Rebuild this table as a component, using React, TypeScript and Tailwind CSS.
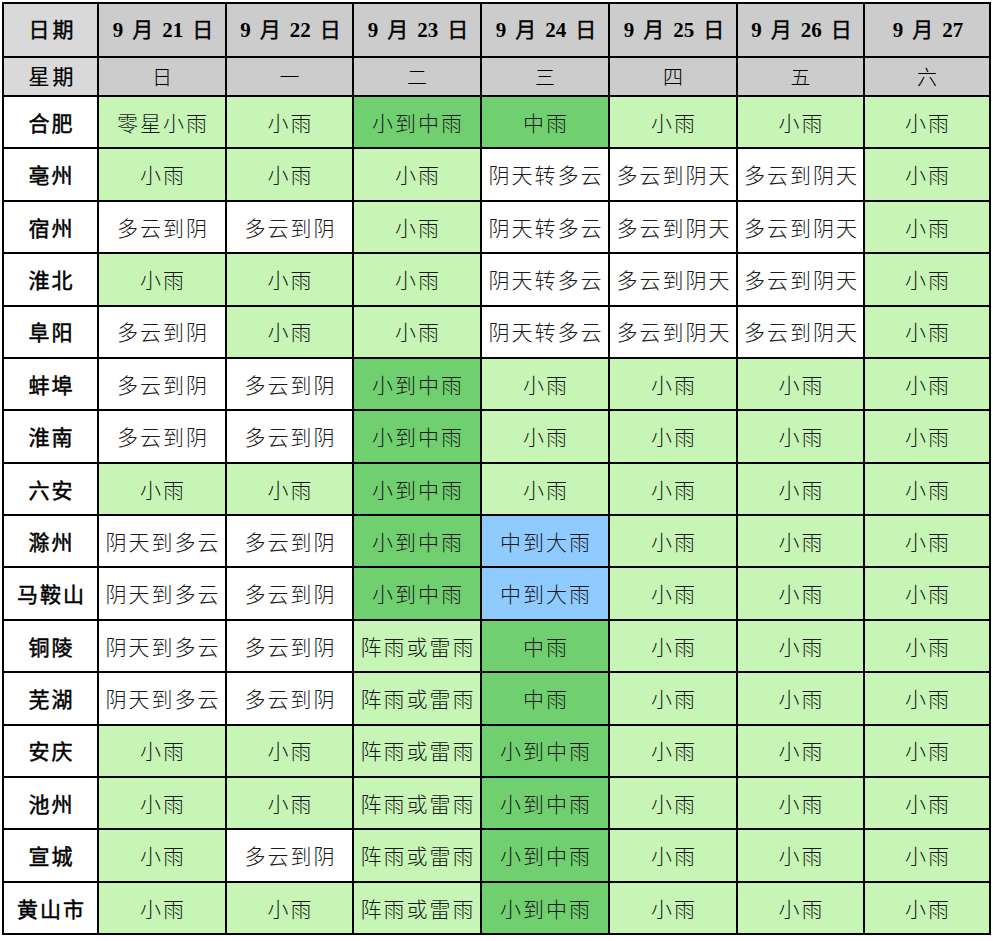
import React from "react";

type C = "L" | "M" | "B" | "W";

const bg: Record<C, string> = {
  L: "bg-[#c6f5b6]",
  M: "bg-[#70d070]",
  B: "bg-[#8fcbff]",
  W: "bg-white",
};

const dates: [string, string][] = [
  ["21", "日"],
  ["22", "日"],
  ["23", "日"],
  ["24", "日"],
  ["25", "日"],
  ["26", "日"],
  ["27", ""],
];
const weeks = ["日", "一", "二", "三", "四", "五", "六"];

const rows: [string, [string, C][]][] = [
  ["合肥", [["零星小雨", "L"], ["小雨", "L"], ["小到中雨", "M"], ["中雨", "M"], ["小雨", "L"], ["小雨", "L"], ["小雨", "L"]]],
  ["亳州", [["小雨", "L"], ["小雨", "L"], ["小雨", "L"], ["阴天转多云", "W"], ["多云到阴天", "W"], ["多云到阴天", "W"], ["小雨", "L"]]],
  ["宿州", [["多云到阴", "W"], ["多云到阴", "W"], ["小雨", "L"], ["阴天转多云", "W"], ["多云到阴天", "W"], ["多云到阴天", "W"], ["小雨", "L"]]],
  ["淮北", [["小雨", "L"], ["小雨", "L"], ["小雨", "L"], ["阴天转多云", "W"], ["多云到阴天", "W"], ["多云到阴天", "W"], ["小雨", "L"]]],
  ["阜阳", [["多云到阴", "W"], ["小雨", "L"], ["小雨", "L"], ["阴天转多云", "W"], ["多云到阴天", "W"], ["多云到阴天", "W"], ["小雨", "L"]]],
  ["蚌埠", [["多云到阴", "W"], ["多云到阴", "W"], ["小到中雨", "M"], ["小雨", "L"], ["小雨", "L"], ["小雨", "L"], ["小雨", "L"]]],
  ["淮南", [["多云到阴", "W"], ["多云到阴", "W"], ["小到中雨", "M"], ["小雨", "L"], ["小雨", "L"], ["小雨", "L"], ["小雨", "L"]]],
  ["六安", [["小雨", "L"], ["小雨", "L"], ["小到中雨", "M"], ["小雨", "L"], ["小雨", "L"], ["小雨", "L"], ["小雨", "L"]]],
  ["滁州", [["阴天到多云", "W"], ["多云到阴", "W"], ["小到中雨", "M"], ["中到大雨", "B"], ["小雨", "L"], ["小雨", "L"], ["小雨", "L"]]],
  ["马鞍山", [["阴天到多云", "W"], ["多云到阴", "W"], ["小到中雨", "M"], ["中到大雨", "B"], ["小雨", "L"], ["小雨", "L"], ["小雨", "L"]]],
  ["铜陵", [["阴天到多云", "W"], ["多云到阴", "W"], ["阵雨或雷雨", "L"], ["中雨", "M"], ["小雨", "L"], ["小雨", "L"], ["小雨", "L"]]],
  ["芜湖", [["阴天到多云", "W"], ["多云到阴", "W"], ["阵雨或雷雨", "L"], ["中雨", "M"], ["小雨", "L"], ["小雨", "L"], ["小雨", "L"]]],
  ["安庆", [["小雨", "L"], ["小雨", "L"], ["阵雨或雷雨", "L"], ["小到中雨", "M"], ["小雨", "L"], ["小雨", "L"], ["小雨", "L"]]],
  ["池州", [["小雨", "L"], ["小雨", "L"], ["阵雨或雷雨", "L"], ["小到中雨", "M"], ["小雨", "L"], ["小雨", "L"], ["小雨", "L"]]],
  ["宣城", [["小雨", "L"], ["多云到阴", "W"], ["阵雨或雷雨", "L"], ["小到中雨", "M"], ["小雨", "L"], ["小雨", "L"], ["小雨", "L"]]],
  ["黄山市", [["小雨", "L"], ["小雨", "L"], ["阵雨或雷雨", "L"], ["小到中雨", "M"], ["小雨", "L"], ["小雨", "L"], ["小雨", "L"]]],
];

const font = "font-['Liberation_Serif','Noto_Sans_CJK_SC',serif]";

export default function App() {
  return (
    <div className="bg-white w-[993px] h-[941px] pl-[2px] pt-[2px]">
      <div
        className={`${font} text-black grid bg-black p-[2px] gap-[2px] w-[989px] h-[933px] grid-cols-[93px_126px_125px_126px_126px_126px_125px_124px] grid-rows-[52px_37px_repeat(16,1fr)]`}
      >
        <div className="bg-[#d9d9d9] flex items-center justify-center text-[21px] tracking-[3px] pl-[4px] pt-[2px] [-webkit-text-stroke:0.4px_black]">
          日期
        </div>
        {dates.map(([n, r]) => (
          <div
            key={n}
            className="bg-[#cccccc] flex items-center justify-center gap-[9px] text-[21px] font-bold pt-[2px] pl-[2px]"
          >
            <span>9</span>
            <span className="font-normal [-webkit-text-stroke:0.4px_black]">月</span>
            <span>{n}</span>
            {r && <span className="font-normal [-webkit-text-stroke:0.4px_black]">{r}</span>}
          </div>
        ))}
        <div className="bg-[#d9d9d9] flex items-center justify-center text-[21px] tracking-[3px] pl-[4px] pt-[2px] [-webkit-text-stroke:0.2px_black]">
          星期
        </div>
        {weeks.map((w) => (
          <div key={w} className="bg-[#cccccc] flex items-center justify-center text-[20px] font-light pt-[2px]">
            {w}
          </div>
        ))}
        {rows.map(([city, cells]) => (
          <React.Fragment key={city}>
            <div className="bg-white flex items-center justify-center text-[21px] tracking-[2px] pl-[2px] pt-[5px] [-webkit-text-stroke:0.5px_black]">
              {city}
            </div>
            {cells.map(([t, c], i) => (
              <div
                key={i}
                className={`${bg[c]} flex items-center justify-center text-[21px] font-light text-[#1a1a1a] tracking-[2px] pl-[2px] pt-[5px] whitespace-nowrap`}
              >
                {t}
              </div>
            ))}
          </React.Fragment>
        ))}
      </div>
    </div>
  );
}
